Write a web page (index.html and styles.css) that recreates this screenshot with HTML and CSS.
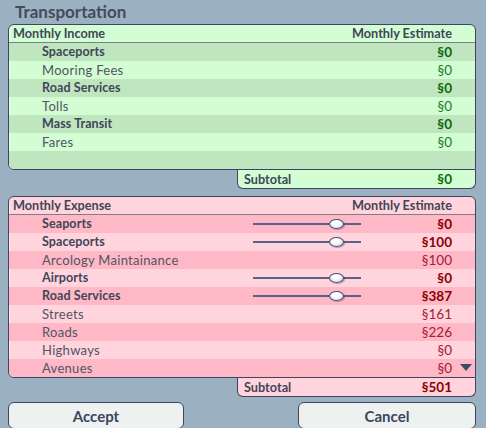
FILE: index.html
```html
<!DOCTYPE html>
<html>
<head>
<meta charset="utf-8">
<link rel="stylesheet" href="styles.css">
</head>
<body>
<div class="screen">
  <h1 class="title">Transportation</h1>

  <section class="panel income">
    <div class="head"><span>Monthly Income</span><span>Monthly Estimate</span></div>
    <div class="row dark major"><span class="name">Spaceports</span><span class="val">§0</span></div>
    <div class="row"><span class="name">Mooring Fees</span><span class="val">§0</span></div>
    <div class="row dark major"><span class="name">Road Services</span><span class="val">§0</span></div>
    <div class="row"><span class="name">Tolls</span><span class="val">§0</span></div>
    <div class="row dark major"><span class="name">Mass Transit</span><span class="val">§0</span></div>
    <div class="row"><span class="name">Fares</span><span class="val">§0</span></div>
    <div class="row dark"></div>
  </section>
  <div class="subtotal income"><span>Subtotal</span><span class="val">§0</span></div>

  <section class="panel expense">
    <div class="head"><span>Monthly Expense</span><span>Monthly Estimate</span></div>
    <div class="row dark major"><span class="name">Seaports</span><span class="slider"><span class="knob mark"></span></span><span class="val">§0</span></div>
    <div class="row major"><span class="name">Spaceports</span><span class="slider"><span class="knob mark"></span></span><span class="val">§100</span></div>
    <div class="row dark"><span class="name">Arcology Maintainance</span><span></span><span class="val">§100</span></div>
    <div class="row major"><span class="name">Airports</span><span class="slider"><span class="knob"></span></span><span class="val">§0</span></div>
    <div class="row dark major"><span class="name">Road Services</span><span class="slider"><span class="knob"></span></span><span class="val">§387</span></div>
    <div class="row"><span class="name">Streets</span><span></span><span class="val">§161</span></div>
    <div class="row dark"><span class="name">Roads</span><span></span><span class="val">§226</span></div>
    <div class="row"><span class="name">Highways</span><span></span><span class="val">§0</span></div>
    <div class="row dark"><span class="name">Avenues</span><span></span><span class="val">§0</span></div>
    <span class="more" aria-hidden="true"></span>
  </section>
  <div class="subtotal expense"><span>Subtotal</span><span class="val">§501</span></div>

  <div class="buttons">
    <button class="btn">Accept</button>
    <button class="btn">Cancel</button>
  </div>
</div>
</body>
</html>
```

FILE: styles.css
```css
* { box-sizing: border-box; }
html, body { margin: 0; padding: 0; }
body {
  background: #9bb0c1;
  font-family: Lato, "Open Sans", sans-serif;
  color: #3f4658;
  width: 486px;
  height: 428px;
  overflow: hidden;
}
.screen {
  padding: 0 10px 0 8px;
}
.title {
  margin: 0;
  height: 24px;
  padding: 2px 0 0 7px;
  font-size: 17px;
  line-height: 20px;
  font-weight: 700;
  color: #434b5c;
}
.panel {
  position: relative;
  border: 1px solid #3c4561;
  border-radius: 6px 6px 0 6px;
  overflow: hidden;
  box-shadow: inset 1px 0 0 rgba(255,255,255,0.6);
}
.income { background: #d3fdd3; }
.expense { background: #ffd4dc; }
.head {
  display: flex;
  justify-content: space-between;
  height: 18px;
  padding: 0 23px 0 4px;
  border-bottom: 1px solid #7b7f8c;
  font-size: 12.7px;
  font-weight: 700;
  line-height: 17px;
}
.row {
  display: grid;
  grid-template-columns: 1fr 108px 91px;
  align-items: center;
  height: 18px;
  padding: 0 23px 0 33px;
  font-size: 13px;
  line-height: 18px;
}
.income .row { grid-template-columns: 1fr 120px; }
.income .row.dark { background: #bfe6bf; }
.expense .row.dark { background: #ffb8c5; }
.name { letter-spacing: 0.3px; color: #4f5466; }
.major .name { font-size: 12.5px; font-weight: 700; letter-spacing: 0.1px; color: #3f4658; }
.val { text-align: right; font-size: 13.5px; }
.income .val { color: #1f7a1f; }
.income .major .val { color: #0b6b0b; font-weight: 700; }
.expense .val { color: #a3203a; }
.expense .major .val { color: #8b0000; font-weight: 700; }
.slider {
  position: relative;
  height: 18px;
  background: linear-gradient(#5a6287, #5a6287) left 8px / 100% 2px no-repeat;
}
.knob {
  position: absolute;
  left: 76px;
  top: 4px;
  width: 15px;
  height: 10px;
  border-radius: 50%;
  border: 1px solid #4a5278;
  background: radial-gradient(ellipse at 45% 35%, #ffffff 30%, #c4c8da 100%);
  box-shadow: 1px 1px 1px rgba(40,50,80,0.35);
}
.knob.mark::before {
  content: "";
  position: absolute;
  left: 5px;
  top: -5px;
  width: 2px;
  height: 19px;
  background: rgba(255,255,255,0.6);
  z-index: -1;
}
.more {
  position: absolute;
  right: 3px;
  bottom: 6px;
  width: 0;
  height: 0;
  border-left: 6px solid transparent;
  border-right: 6px solid transparent;
  border-top: 7px solid #3f4a68;
}
.subtotal {
  display: flex;
  justify-content: space-between;
  margin-left: 229px;
  height: 19px;
  padding: 0 23px 0 6px;
  border: 1px solid #3c4561;
  border-top: none;
  border-radius: 0 0 6px 6px;
  font-size: 12.7px;
  font-weight: 700;
  line-height: 18px;
}
.subtotal .val { font-size: 13.5px; }
.subtotal.income .val { color: #0b6b0b; }
.subtotal.expense .val { color: #8b0000; }
.subtotal.income { margin-bottom: 7px; }
.buttons {
  display: flex;
  justify-content: space-between;
  margin-top: 5px;
}
.btn {
  width: 176px;
  height: 27px;
  padding: 0;
  border: 1.5px solid #3c4561;
  border-radius: 6px;
  background: #edf2f0;
  font-family: Lato, "Open Sans", sans-serif;
  font-size: 15px;
  font-weight: 700;
  color: #3c4561;
}
.btn + .btn { width: 178px; }
```
